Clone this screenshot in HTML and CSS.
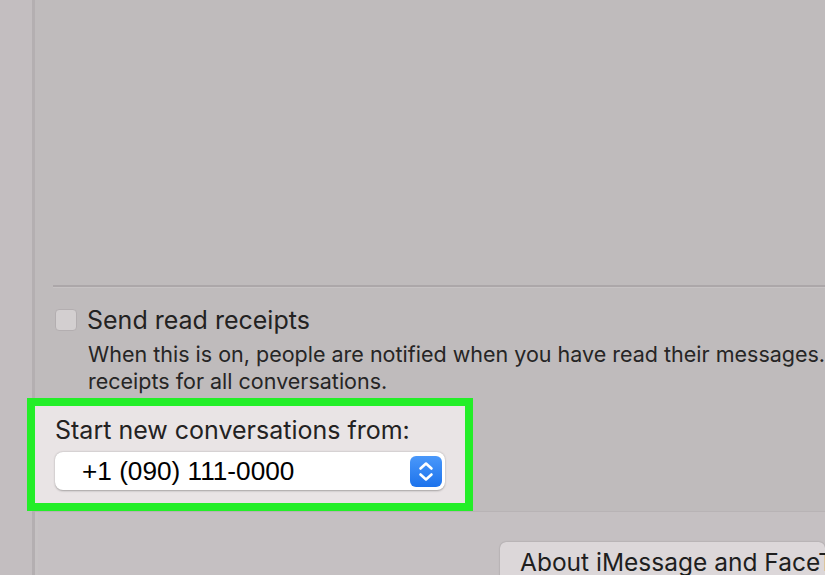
FILE: index.html
```html
<!DOCTYPE html>
<html>
<head>
<meta charset="utf-8">
<link rel="stylesheet" href="styles.css">
</head>
<body>
<div class="window">
  <div class="strip"></div>
  <div class="content">
    <div class="panel">
      <div class="blank"></div>
      <div class="divider"></div>
      <div class="receipts">
        <div class="check-row">
          <span class="checkbox"></span>
          <span class="label">Send read receipts</span>
        </div>
        <p class="desc">When this is on, people are notified when you have read their messages.<br>receipts for all conversations.</p>
      </div>
      <div class="highlight">
        <div class="start-label">Start new conversations from:</div>
        <div class="popup">
          <span class="phone">+1 (090) 111-0000</span>
          <span class="stepper">
            <svg width="32" height="31" viewBox="0 0 32 31">
              <path d="M10.5 12.5 L16 7.5 L21.5 12.5" fill="none" stroke="#fff" stroke-width="2.6" stroke-linecap="round" stroke-linejoin="round"/>
              <path d="M10.5 18.5 L16 23.5 L21.5 18.5" fill="none" stroke="#fff" stroke-width="2.6" stroke-linecap="round" stroke-linejoin="round"/>
            </svg>
          </span>
        </div>
      </div>
    </div>
    <div class="footer">
      <button class="about">About iMessage and FaceTime</button>
    </div>
  </div>
</div>
</body>
</html>
```

FILE: styles.css
```css
html, body {
  margin: 0;
  padding: 0;
  width: 825px;
  height: 575px;
  overflow: hidden;
  background: #c3bec0;
  font-family: Inter, "Liberation Sans", sans-serif;
}
.window {
  display: flex;
  width: 825px;
  height: 575px;
}
.strip {
  width: 32px;
  flex: none;
  background: #c3bec0;
}
.content {
  flex: 1;
  min-width: 0;
  display: flex;
  flex-direction: column;
  border-left: 3px solid #b4afb1;
  box-shadow: inset 3px 0 0 #c6c2c3;
  background: #c5c0c2;
}
.panel {
  height: 512px;
  flex: none;
  background: #bfbbbc;
  box-sizing: border-box;
  border-bottom: 1px solid #b8b3b5;
  display: flex;
  flex-direction: column;
  padding-left: 18px;
}
.panel > * {
  flex: none;
}
.blank {
  height: 285px;
}
.divider {
  height: 2px;
  background: #aca7a9;
  border-bottom: 1px solid #c7c3c4;
}
.receipts {
  padding-top: 17px;
}
.check-row {
  display: flex;
  align-items: center;
  gap: 10px;
}
.checkbox {
  width: 22px;
  height: 22px;
  box-sizing: border-box;
  border-radius: 4px;
  background: #d3cfd0;
  border: 1px solid #b3aeb0;
  margin-left: 2px;
}
.label {
  font-size: 25px;
  color: #232222;
  line-height: 30px;
}
.desc {
  margin: 6px 0 0 35px;
  font-size: 21.5px;
  line-height: 27px;
  color: #262525;
  white-space: nowrap;
}
.highlight {
  margin: 3px 0 0 -26px;
  width: 446px;
  height: 113px;
  box-sizing: border-box;
  border: 8px solid #23ee28;
  background: #e9e4e5;
  padding: 9px 0 0 20px;
}
.start-label {
  font-size: 25px;
  color: #232222;
  line-height: 30px;
}
.popup {
  margin-top: 7px;
  width: 390px;
  height: 38px;
  box-sizing: border-box;
  background: #fff;
  border-radius: 8px;
  box-shadow: 0 0.5px 2px rgba(0,0,0,0.3);
  display: flex;
  align-items: center;
  justify-content: space-between;
  padding: 0 3px 0 27px;
}
.phone {
  font-family: "Liberation Sans", Arial, sans-serif;
  font-size: 26.2px;
  color: #000;
}
.stepper {
  width: 32px;
  height: 31px;
  border-radius: 6px;
  background: linear-gradient(#4a98fa, #1d73ec);
  display: flex;
}
.footer {
  flex: 1;
  padding: 30px 0 0 465px;
}
.about {
  font-family: Inter, "Liberation Sans", sans-serif;
  font-size: 24.5px;
  color: #1e1e1e;
  background: #dcd7d9;
  border: none;
  border-radius: 6px;
  box-shadow: 0 0.5px 1.5px rgba(0,0,0,0.3);
  height: 40px;
  padding: 0 0 0 20px;
  white-space: nowrap;
  text-align: left;
  width: 325px;
  overflow: hidden;
  font-weight: 400;
}
```
